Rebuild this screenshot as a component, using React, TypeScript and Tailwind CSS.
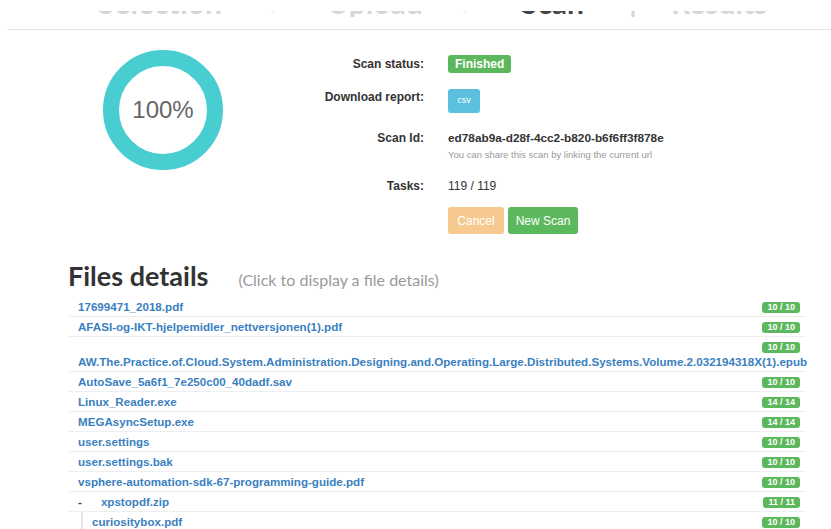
import React from "react";

type FileRow = {
  name: string;
  done: number;
  total: number;
  children?: FileRow[];
};

const files: FileRow[] = [
  { name: "17699471_2018.pdf", done: 10, total: 10 },
  { name: "AFASI-og-IKT-hjelpemidler_nettversjonen(1).pdf", done: 10, total: 10 },
  {
    name: "AW.The.Practice.of.Cloud.System.Administration.Designing.and.Operating.Large.Distributed.Systems.Volume.2.032194318X(1).epub",
    done: 10,
    total: 10,
  },
  { name: "AutoSave_5a6f1_7e250c00_40dadf.sav", done: 10, total: 10 },
  { name: "Linux_Reader.exe", done: 14, total: 14 },
  { name: "MEGAsyncSetup.exe", done: 14, total: 14 },
  { name: "user.settings", done: 10, total: 10 },
  { name: "user.settings.bak", done: 10, total: 10 },
  { name: "vsphere-automation-sdk-67-programming-guide.pdf", done: 10, total: 10 },
  {
    name: "xpstopdf.zip",
    done: 11,
    total: 11,
    children: [{ name: "curiositybox.pdf", done: 10, total: 10 }],
  },
];

const sans = { fontFamily: '"Liberation Sans", Arial, sans-serif' };
const lato = { fontFamily: 'Lato, "Open Sans", sans-serif' };

function Badge({ done, total }: { done: number; total: number }) {
  return (
    <span className="float-right mt-[2px] mb-[2px] flex h-[11px] items-center rounded-[3px] bg-[#5cb85c] px-[5px] text-[9px] font-bold leading-none text-white">
      {done} / {total}
    </span>
  );
}

function ProgressRing() {
  return (
    <div className="relative h-[120px] w-[120px]">
      <svg width="120" height="120" viewBox="0 0 120 120">
        <circle cx="60" cy="60" r="52" fill="none" stroke="#48cdd0" strokeWidth="16" />
      </svg>
      <div
        className="absolute inset-0 flex items-center justify-center text-[24px] text-[#666]"
        style={sans}
      >
        100%
      </div>
    </div>
  );
}

// Wizard steps; the page is scrolled so only the lower edge of the labels shows.
function Steps() {
  return (
    <div className="h-[30px] border-b border-[#e3e3e3] pt-[11px]">
      <div className="h-[6px] overflow-hidden">
        <div
          className="mt-[-13px] flex items-start text-[30px] font-bold leading-[8px]"
          style={lato}
        >
          <span className="ml-[91px] w-[138px] shrink-0 text-[#d6d6d6]">Selection</span>
          <span className="ml-[34px] w-[10px] shrink-0 text-[#d6d6d6]">›</span>
          <span className="ml-[47px] w-[100px] shrink-0 text-[#d6d6d6]">Upload</span>
          <span className="ml-[35px] w-[10px] shrink-0 text-[#d6d6d6]">›</span>
          <span className="ml-[49px] w-[70px] shrink-0 text-[#444]">Scan</span>
          <span className="ml-[38px] w-[6px] shrink-0 text-[#d6d6d6]">|</span>
          <span className="ml-[36px] shrink-0 text-[#d6d6d6]">Results</span>
        </div>
      </div>
    </div>
  );
}

function Label({ children }: { children: React.ReactNode }) {
  return (
    <div className="w-[201px] shrink-0 text-right text-[12px] font-bold leading-[17px] text-[#333]">
      {children}
    </div>
  );
}

function ScanInfo() {
  return (
    <div className="flex flex-col pt-[25px]" style={sans}>
      <div className="flex h-[18px] items-center">
        <Label>Scan status:</Label>
        <span className="ml-[24px] flex h-[18px] items-center rounded-[3px] bg-[#5cb85c] px-[7px] text-[12px] font-bold text-white">
          Finished
        </span>
      </div>

      <div className="mt-[16px] flex items-start">
        <Label>Download report:</Label>
        <button className="ml-[24px] flex h-[24px] w-[32px] items-center justify-center rounded-[3px] bg-[#5bc0de] text-[9px] text-white">
          csv
        </button>
      </div>

      <div className="mt-[17px] flex items-start">
        <Label>Scan Id:</Label>
        <div className="ml-[24px] flex flex-col">
          <span className="text-[11.8px] font-bold leading-[17px] text-[#333]">
            ed78ab9a-d28f-4cc2-b820-b6f6ff3f878e
          </span>
          <span className="mt-[1px] text-[9.5px] leading-[13px] text-[#999]">
            You can share this scan by linking the current url
          </span>
        </div>
      </div>

      <div className="mt-[17px] flex items-start">
        <Label>Tasks:</Label>
        <span className="ml-[24px] text-[12px] leading-[17px] text-[#333]">119 / 119</span>
      </div>

      <div className="mt-[12px] flex gap-[4px] pl-[225px]">
        <button className="h-[27px] w-[56px] rounded-[3px] bg-[#f6ca8f] text-[12px] text-white">
          Cancel
        </button>
        <button className="h-[27px] w-[70px] rounded-[3px] bg-[#5cb85c] text-[12px] text-white">
          New Scan
        </button>
      </div>
    </div>
  );
}

const rowClass =
  "border-b border-[#eeeeee] pt-[3px] pb-[2px] pr-[5px] text-[11.6px] font-bold leading-[14px]";

function FileList() {
  return (
    <div className="ml-[68px] w-[737px]" style={sans}>
      {files.map((f) =>
        f.children ? (
          <div key={f.name}>
            <div className={`${rowClass} pl-[10px]`}>
              <Badge done={f.done} total={f.total} />
              <span className="text-[#333]">-</span>
              <span className="ml-[19px] text-[#3a7fc0]">{f.name}</span>
            </div>
            <div className="ml-[13px] border-l-[2px] border-[#e6e6e6]">
              {f.children.map((c) => (
                <div key={c.name} className={`${rowClass} pl-[9px]`}>
                  <Badge done={c.done} total={c.total} />
                  <span className="text-[#3a7fc0]">{c.name}</span>
                </div>
              ))}
            </div>
          </div>
        ) : (
          <div key={f.name} className={`${rowClass} pl-[10px]`}>
            <Badge done={f.done} total={f.total} />
            <span className="whitespace-nowrap text-[#3a7fc0]">{f.name}</span>
          </div>
        )
      )}
    </div>
  );
}

export default function App() {
  return (
    <div className="h-[529px] w-[831px] overflow-hidden bg-white">
      <div className="pl-[7px]">
        <Steps />
      </div>
      <div className="flex items-start">
        <div className="ml-[103px] mt-[20px]">
          <ProgressRing />
        </div>
        <ScanInfo />
      </div>
      <div className="mt-[25px] ml-[68px] flex items-baseline" style={lato}>
        <h2 className="text-[27px] font-bold leading-[34px] text-[#333]">Files details</h2>
        <span className="ml-[30px] text-[16px] text-[#9a9a9a]">
          (Click to display a file details)
        </span>
      </div>
      <div className="mt-[4px]">
        <FileList />
      </div>
    </div>
  );
}
